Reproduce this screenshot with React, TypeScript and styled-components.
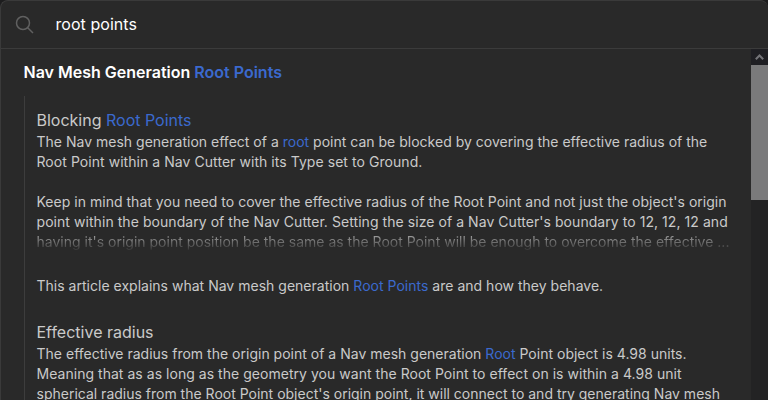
import React from "react";
import styled, { createGlobalStyle } from "styled-components";

const GlobalStyle = createGlobalStyle`
  * { box-sizing: border-box; }
  body { margin: 0; background: #1d1d1e; font-family: Inter, "Liberation Sans", sans-serif; }
  p, h2, h3 { margin: 0; }
`;

const Dialog = styled.div`
  display: flex;
  flex-direction: column;
  height: 400px;
  overflow: hidden;
  background: #292929;
  border: 1px solid #3a3a3a;
  border-right: 0;
  border-bottom: 0;
  border-radius: 8px 8px 0 0;
`;

const SearchBar = styled.header`
  display: flex;
  align-items: center;
  flex: 0 0 48px;
  padding-left: 14px;
  border-bottom: 1px solid #3b3b3b;
`;

const Query = styled.div`
  margin: 0 0 2px 20.5px;
  font-size: 16px;
  line-height: 24px;
  letter-spacing: 0.05px;
  color: #fff;
`;

const Body = styled.div`
  display: flex;
  flex: 1;
  min-height: 0;
`;

const Results = styled.main`
  flex: 1;
  min-width: 0;
  overflow: hidden;
  padding-left: 23px;
`;

const PageTitle = styled.h2`
  margin: 11px 0 0 -0.5px;
  font-size: 16px;
  line-height: 24px;
  font-weight: 600;
  color: #fff;
  white-space: nowrap;
`;

const Sections = styled.div`
  margin-top: 12px;
  padding: 12px 0 0 11.5px;
  border-left: 1px solid #3d3d3d;
`;

const SectionTitle = styled.h3`
  font-size: 16px;
  line-height: 24px;
  font-weight: 400;
  color: #cacaca;
`;

const Excerpt = styled.p`
  margin-bottom: 24px;
  color: #cacaca;
`;

const Line = styled.span<{ $tracking?: number }>`
  display: block;
  height: 20px;
  font-size: 14px;
  line-height: 20px;
  letter-spacing: ${(p) => p.$tracking ?? 0}px;
  white-space: pre;
`;

const FadingLine = styled(Line)`
  color: transparent;
  background: linear-gradient(#a8a8a8 10%, #292929 100%);
  background-clip: text;
  -webkit-background-clip: text;
`;

const Match = styled.mark`
  background: none;
  color: #3b69ce;
`;

const Scrollbar = styled.div`
  display: flex;
  flex-direction: column;
  flex: 0 0 17px;
  background: #232324;
`;

const ScrollUp = styled.div`
  display: grid;
  place-items: center;
  height: 16px;
  background: #1f1f23;
`;

const Thumb = styled.div`
  height: 135px;
  background: #7a7a7b;
`;

export default function App() {
  return (
    <>
      <GlobalStyle />
      <Dialog>
        <SearchBar>
          <svg width="20" height="20" viewBox="0 0 20 20" fill="none" stroke="#606060" strokeWidth="1.5">
            <circle cx="8" cy="8" r="6.5" />
            <path d="M12.7 12.7 18 18" />
          </svg>
          <Query>root points</Query>
        </SearchBar>
        <Body>
          <Results>
            <PageTitle>Nav Mesh Generation <Match>Root Points</Match></PageTitle>
            <Sections>
              <SectionTitle>Blocking <Match>Root Points</Match></SectionTitle>
              <Excerpt>
                <Line $tracking={0.008}>The Nav mesh generation effect of a <Match>root</Match> point can be blocked by covering the effective radius of the</Line>
                <Line $tracking={0.055}>Root Point within a Nav Cutter with its Type set to Ground.</Line>
                <Line />
                <Line $tracking={0.022}>Keep in mind that you need to cover the effective radius of the Root Point and not just the object's origin</Line>
                <Line $tracking={0.058}>point within the boundary of the Nav Cutter. Setting the size of a Nav Cutter's boundary to 12, 12, 12 and</Line>
                <FadingLine $tracking={0.005}>having it's origin point position be the same as the Root Point will be enough to overcome the effective ...</FadingLine>
              </Excerpt>
              <Excerpt>
                <Line $tracking={0.014}>This article explains what Nav mesh generation <Match>Root Points</Match> are and how they behave.</Line>
              </Excerpt>
              <SectionTitle>Effective radius</SectionTitle>
              <Excerpt>
                <Line $tracking={0.01}>The effective radius from the origin point of a Nav mesh generation <Match>Root</Match> Point object is 4.98 units.</Line>
                <Line $tracking={0.035}>Meaning that as as long as the geometry you want the Root Point to effect on is within a 4.98 unit</Line>
                <Line>spherical radius from the Root Point object's origin point, it will connect to and try generating Nav mesh</Line>
              </Excerpt>
            </Sections>
          </Results>
          <Scrollbar>
            <ScrollUp>
              <svg width="9" height="6" viewBox="0 0 9 6" fill="none" stroke="#747478" strokeWidth="2">
                <path d="M.8 5.2 4.5 1.5 8.2 5.2" />
              </svg>
            </ScrollUp>
            <Thumb />
          </Scrollbar>
        </Body>
      </Dialog>
    </>
  );
}
